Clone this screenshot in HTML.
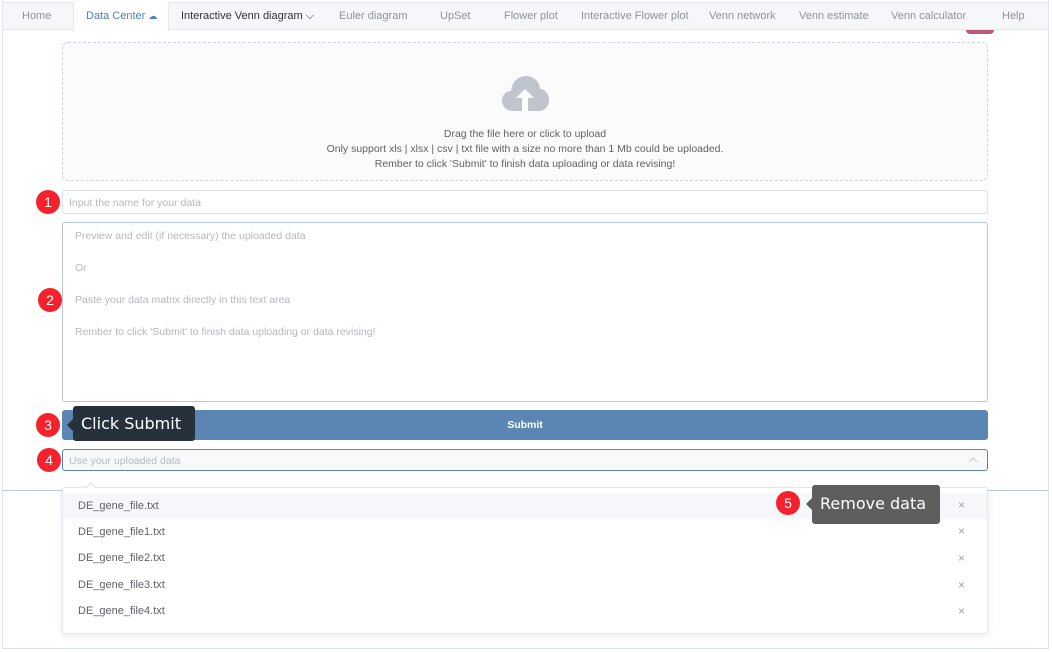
<!DOCTYPE html><html><head><style>
*{box-sizing:border-box;margin:0;padding:0}
body{width:1052px;height:652px;background:#fff;font-family:"Liberation Sans",Arial,sans-serif;position:relative;overflow:hidden;color:#606266}
.a{position:absolute}
.nav{left:2px;top:2px;width:1047px;height:28px;background:#f5f7fa;border:1px solid #e4e7ed}
.t{position:absolute;top:10px;font-size:11px;color:#909399;white-space:nowrap}
.num{position:absolute;width:24px;height:24px;border-radius:50%;background:#f5222d;color:#fff;font-size:14px;text-align:center;line-height:24px}
.it{position:absolute;left:78px;font-size:11px;color:#606266}
.x{position:absolute;left:958px;font-size:12px;color:#a0a4ad}
</style></head><body>
<div class="a" style="left:2px;top:0;width:1047px;height:491px;border:1px solid #dfe3ea;border-top:none;border-bottom-color:#b8c8dc"></div>
<div class="a" style="left:2px;top:491px;width:1047px;height:158px;border:1px solid #dfe3ea;border-top:none"></div>
<div class="a nav"></div>
<div class="a" style="left:73px;top:2px;width:96px;height:29px;background:#fff;border-left:1px solid #e4e7ed;border-right:1px solid #e4e7ed"></div>
<div class="a" style="left:966px;top:30px;width:28px;height:4px;background:#c0567a;border-radius:0 0 14px 14px"></div>
<span class="t" style="left:22px">Home</span>
<span class="t" style="left:86px;color:#4f7fb8">Data Center <span style="font-size:9px">☁</span></span>
<span class="t" style="left:181px;color:#303133">Interactive Venn diagram ⌵</span>
<span class="t" style="left:339px">Euler diagram</span>
<span class="t" style="left:440px">UpSet</span>
<span class="t" style="left:504px">Flower plot</span>
<span class="t" style="left:581px">Interactive Flower plot</span>
<span class="t" style="left:709px">Venn network</span>
<span class="t" style="left:799px">Venn estimate</span>
<span class="t" style="left:891px">Venn calculator</span>
<span class="t" style="left:1002px">Help</span>

<div class="a" style="left:62px;top:42px;width:926px;height:139px;border:1px dashed #d0d4db;border-radius:6px;background:#fafbfc"></div>
<svg class="a" style="left:501px;top:75px" width="48" height="36" viewBox="0 0 48 36"><path d="M12 36C5 36 1 31 1 25.5 1 20 5 16 10 16 11 7 17 1 25 1 33 1 39 7 39 14 44 14 48 19 48 25 48 31 44 36 37 36Z" fill="#c0c4cc"/><path d="M24 14 15 23H21V36H27V23H33Z" fill="#fff"/></svg>
<div class="a" style="left:62px;top:127px;width:926px;text-align:center;font-size:10.5px;line-height:15px;color:#606266">Drag the file here or click to upload<br>Only support xls | xlsx | csv | txt file with a size no more than 1 Mb could be uploaded.<br>Rember to click 'Submit' to finish data uploading or data revising!</div>

<div class="num" style="left:36px;top:190px">1</div>
<div class="a" style="left:62px;top:190px;width:926px;height:24px;border:1px solid #dcdfe6;border-radius:3px;font-size:10.5px;color:#b4b8c0;padding:6px 0 0 6px">Input the name for your data</div>
<div class="num" style="left:38px;top:288px">2</div>
<div class="a" style="left:62px;top:222px;width:926px;height:180px;border:1px solid #b8c6dc;border-radius:3px;font-size:10.5px;color:#b4b8c0;padding:7px 0 0 12px"><div style="line-height:12px">Preview and edit (if necessary) the uploaded data</div><div style="margin-top:20px;line-height:12px">Or</div><div style="margin-top:20px;line-height:12px">Paste your data matrix directly in this text area</div><div style="margin-top:20px;line-height:12px">Rember to click 'Submit' to finish data uploading or data revising!</div></div>

<div class="num" style="left:36px;top:413px">3</div>
<div class="a" style="left:62px;top:410px;width:926px;height:30px;background:#5b86b4;border-radius:3px;color:#fff;font-size:10.5px;font-weight:bold;text-align:center;line-height:30px">Submit</div>
<div class="a" style="left:73px;top:406px;width:122px;height:35px;background:#26313d;border-radius:3px;color:#fff;line-height:35px;padding-left:8px;font-family:'DejaVu Sans',sans-serif;font-size:16px">Click Submit</div>
<div class="a" style="left:67px;top:419px;width:0;height:0;border:6px solid transparent;border-right-color:#26313d;border-left:none"></div>

<div class="num" style="left:37px;top:448px">4</div>
<div class="a" style="left:62px;top:449px;width:926px;height:22px;border:1px solid #5b86b4;border-radius:3px;background:#f8f9fb;font-size:10.5px;color:#b4b8c0;padding:5px 0 0 6px">Use your uploaded data<svg style="position:absolute;right:9px;top:7px" width="10" height="6" viewBox="0 0 10 6"><path d="M1 5 5 1 9 5" fill="none" stroke="#c0c4cc" stroke-width="1"/></svg></div>

<div class="a" style="left:62px;top:487px;width:926px;height:147px;background:#fff;border:1px solid #e4e7ed;box-shadow:0 2px 8px rgba(0,0,0,.08);border-radius:3px"></div>
<div class="a" style="left:86px;top:482px;width:0;height:0;border:5px solid transparent;border-bottom-color:#e4e7ed;border-top:none"></div>
<div class="a" style="left:87px;top:483px;width:0;height:0;border:4px solid transparent;border-bottom-color:#fff;border-top:none;margin-top:1px"></div>
<div class="a" style="left:63px;top:493px;width:924px;height:26px;background:#f5f7fa"></div>
<div class="it" style="top:500px">DE_gene_file.txt</div>
<div class="it" style="top:526px">DE_gene_file1.txt</div>
<div class="it" style="top:552px">DE_gene_file2.txt</div>
<div class="it" style="top:579px">DE_gene_file3.txt</div>
<div class="it" style="top:605px">DE_gene_file4.txt</div>
<div class="x" style="top:498px">×</div><div class="x" style="top:524px">×</div><div class="x" style="top:551px">×</div><div class="x" style="top:578px">×</div><div class="x" style="top:604px">×</div>

<div class="num" style="left:776px;top:491px">5</div>
<div class="a" style="left:812px;top:485px;width:128px;height:39px;background:#5e5e5e;border-radius:3px;color:#fff;font-family:'DejaVu Sans',sans-serif;font-size:16px;line-height:38px;padding-left:8px">Remove data</div>
<div class="a" style="left:806px;top:498px;width:0;height:0;border:6px solid transparent;border-right-color:#5e5e5e;border-left:none"></div>
</body></html>
